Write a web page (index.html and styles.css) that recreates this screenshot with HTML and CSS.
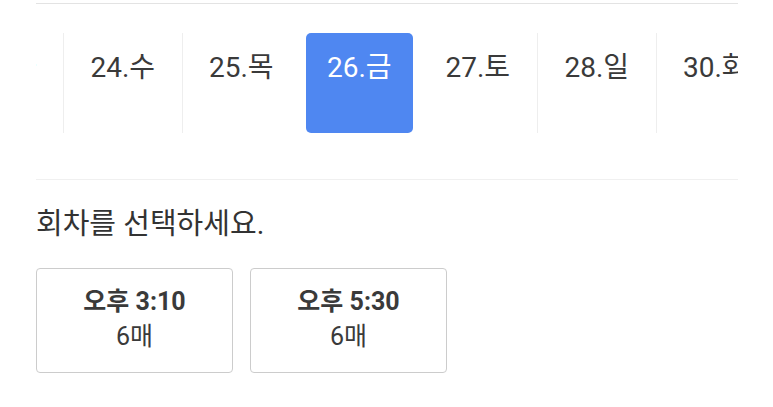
FILE: index.html
```html
<!DOCTYPE html>
<html lang="ko">
<head>
<meta charset="utf-8">
<title>회차 선택</title>
<link rel="stylesheet" href="styles.css">
</head>
<body>
<div class="page">
  <div class="rule-top"></div>
  <div class="dates">
    <div class="track">
      <div class="day">23.화</div>
      <div class="day">24.수</div>
      <div class="day">25.목</div>
      <div class="day selected"><span class="pill">26.금</span></div>
      <div class="day after">27.토</div>
      <div class="day">28.일</div>
      <div class="day">30.화</div>
    </div>
  </div>
  <div class="rule"></div>
  <h2 class="title">회차를 선택하세요.</h2>
  <div class="slots">
    <div class="slot">
      <div class="time">오후 3:10</div>
      <div class="count">6매</div>
    </div>
    <div class="slot">
      <div class="time">오후 5:30</div>
      <div class="count">6매</div>
    </div>
  </div>
</div>
</body>
</html>
```
FILE: styles.css
```css
html, body {
  margin: 0;
  padding: 0;
  background: #ffffff;
}
body {
  font-family: Roboto, "Noto Sans CJK KR", sans-serif;
  color: #3a3a3a;
}
.page {
  width: 702px;
  padding-left: 36px;
}
.rule-top {
  margin-top: 3px;
  height: 1px;
  background: #e3e3e3;
}
.dates {
  margin-top: 29px;
  height: 100px;
  overflow: hidden;
}
.track {
  display: flex;
  margin-left: -91.5px;
  height: 100px;
}
.day {
  flex: 0 0 118.5px;
  box-sizing: border-box;
  border-left: 1px solid #eeeeee;
  height: 100px;
  padding-top: 18px;
  font-size: 28px;
  line-height: 34px;
  text-align: center;
  white-space: nowrap;
}
.day.selected,
.day.after {
  border-left: none;
}
.day.selected {
  padding: 0 6px;
  display: flex;
}
.pill {
  flex: 1;
  background: #4f87f1;
  color: #ffffff;
  border-radius: 5px;
  padding-top: 18px;
}
.rule {
  margin-top: 46px;
  height: 1px;
  background: #f0f0f0;
}
.title {
  margin: 25px 0 0;
  font-size: 29px;
  line-height: 38px;
  font-weight: 400;
  color: #333333;
}
.slots {
  margin-top: 25px;
  display: flex;
  gap: 17px;
}
.slot {
  box-sizing: border-box;
  width: 197px;
  height: 105px;
  border: 1px solid #cccccc;
  border-radius: 4px;
  padding-top: 15px;
  text-align: center;
  font-size: 25px;
  line-height: 35px;
}
.time {
  font-weight: 700;
}
```
